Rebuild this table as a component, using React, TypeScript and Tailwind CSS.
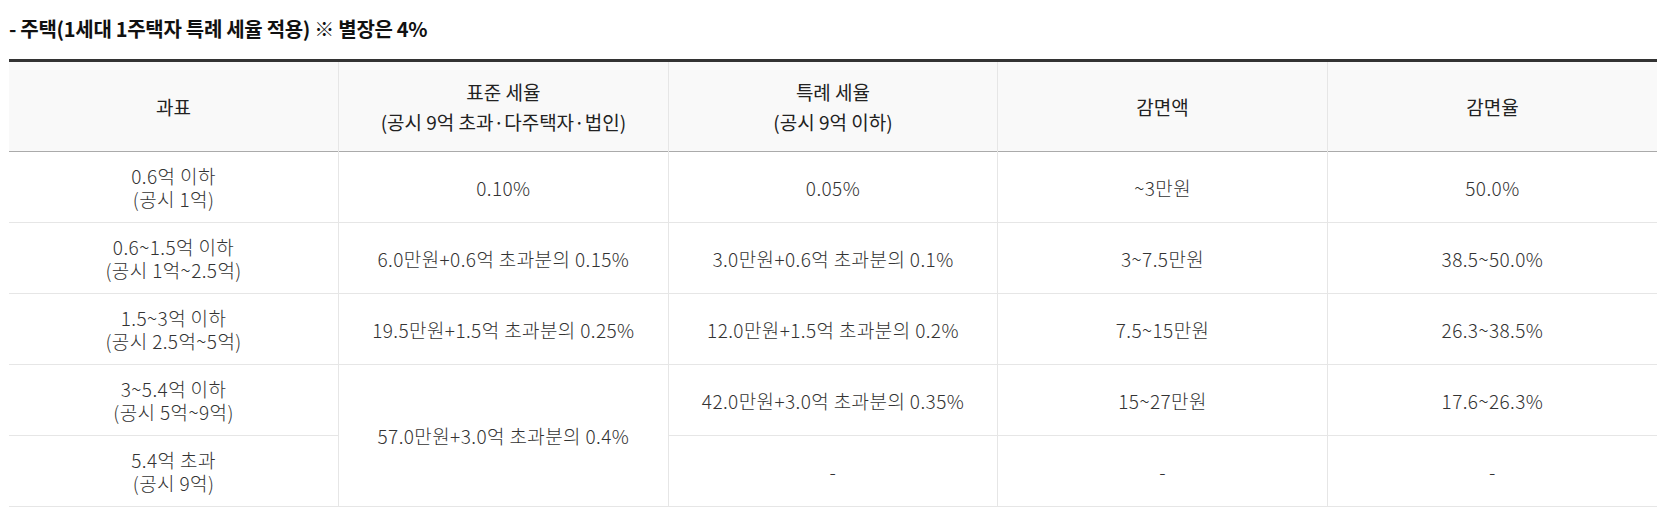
import React from "react"

type Row = {
    base: string[]
    standard?: string
    standardSpan?: number
    special: string
    amount: string
    rate: string
}

const rows: Row[] = [
    { base: ["0.6억 이하", "(공시 1억)"], standard: "0.10%", special: "0.05%", amount: "~3만원", rate: "50.0%" },
    { base: ["0.6~1.5억 이하", "(공시 1억~2.5억)"], standard: "6.0만원+0.6억 초과분의 0.15%", special: "3.0만원+0.6억 초과분의 0.1%", amount: "3~7.5만원", rate: "38.5~50.0%" },
    { base: ["1.5~3억 이하", "(공시 2.5억~5억)"], standard: "19.5만원+1.5억 초과분의 0.25%", special: "12.0만원+1.5억 초과분의 0.2%", amount: "7.5~15만원", rate: "26.3~38.5%" },
    { base: ["3~5.4억 이하", "(공시 5억~9억)"], standard: "57.0만원+3.0억 초과분의 0.4%", standardSpan: 2, special: "42.0만원+3.0억 초과분의 0.35%", amount: "15~27만원", rate: "17.6~26.3%" },
    { base: ["5.4억 초과", "(공시 9억)"], special: "-", amount: "-", rate: "-" },
]

const font = { fontFamily: '"Noto Sans CJK KR", "Noto Sans", sans-serif' }

export default function App() {
    return (
        <div className="bg-white w-[1657px] h-[513px] text-[#333]" style={font}>
            <h3 className="pl-[9px] pt-[14px] h-[59px] text-[20px] font-bold text-[#111] tracking-[-0.3px]">
                - 주택(1세대 1주택자 특례 세율 적용) ※ 별장은 4%
            </h3>
            <div className="pl-[9px]">
                <table className="w-[1648px] table-fixed border-collapse border-t-[3px] border-[#333]">
                    <thead>
                        <tr className="bg-[#f9f9f9] h-[91px] border-b border-b-[#aaa]">
                            <th className="font-normal text-[19px] leading-[30px] text-[#222] border-r border-[#e6e6e6]">과표</th>
                            <th className="font-normal text-[19px] leading-[30px] text-[#222] border-r border-[#e6e6e6]">
                                표준 세율<br />(공시 9억 초과·다주택자·법인)
                            </th>
                            <th className="font-normal text-[19px] leading-[30px] text-[#222] border-r border-[#e6e6e6]">
                                특례 세율<br />(공시 9억 이하)
                            </th>
                            <th className="font-normal text-[19px] leading-[30px] text-[#222] border-r border-[#e6e6e6]">감면액</th>
                            <th className="font-normal text-[19px] leading-[30px] text-[#222]">감면율</th>
                        </tr>
                    </thead>
                    <tbody>
                        {rows.map((r, i) => (
                            <tr key={i} className="h-[71px] border-b border-[#e6e6e6] text-center text-[19px] leading-[23px] tracking-[0.4px] font-light">
                                <td className="border-r border-[#e6e6e6]">
                                    {r.base[0]}<br />{r.base[1]}
                                </td>
                                {r.standard !== undefined && (
                                    <td rowSpan={r.standardSpan} className="border-r border-b border-[#e6e6e6]">{r.standard}</td>
                                )}
                                <td className="border-r border-[#e6e6e6]">{r.special}</td>
                                <td className="border-r border-[#e6e6e6]">{r.amount}</td>
                                <td>{r.rate}</td>
                            </tr>
                        ))}
                    </tbody>
                </table>
            </div>
        </div>
    )
}
